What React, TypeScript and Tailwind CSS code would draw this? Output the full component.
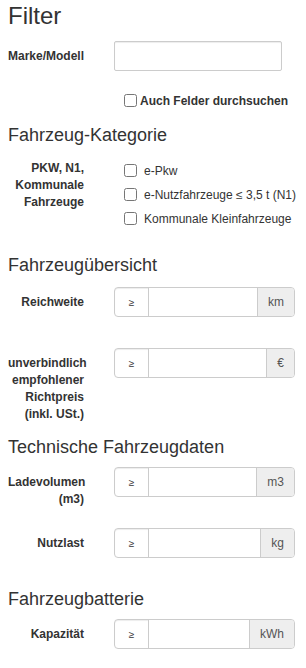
import { FC, ReactNode } from "react";

// Feld mit "≥" vorne und Einheit hinten
const RangeInput: FC<{ unit: string }> = ({ unit }) => (
  <div className="flex h-[30px] w-[181px] rounded-[4px] border border-[#ccc] shadow-[inset_0_1px_1px_rgba(0,0,0,0.075)]">
    <span className="flex w-[34px] shrink-0 items-center justify-center border-r border-[#ccc] text-[10px] text-[#333]">
      ≥
    </span>
    <input className="min-w-0 flex-1 bg-white outline-none" />
    <span className="flex shrink-0 items-center rounded-r-[3px] border-l border-[#ccc] bg-[#eee] px-[10px] text-[12px] text-[#555]">
      {unit}
    </span>
  </div>
);

const Row: FC<{ label: ReactNode; className?: string; children: ReactNode }> = ({
  label,
  className = "",
  children,
}) => (
  <div className={`flex items-start gap-[30px] ${className}`}>
    <label className="w-[76px] shrink-0 pt-[7px] text-right text-[12px] font-bold leading-[17px] text-[#333]">
      {label}
    </label>
    {children}
  </div>
);

const Heading: FC<{ children: ReactNode; className?: string }> = ({ children, className = "" }) => (
  <h3 className={`text-[18px] leading-[20px] text-[#333] ${className}`}>{children}</h3>
);

const Check: FC<{ children: ReactNode; bold?: boolean }> = ({ children, bold }) => (
  <label className={`flex h-[17px] items-center text-[12px] text-[#333] ${bold ? "font-bold" : ""}`}>
    <input type="checkbox" className="m-0 size-[13px]" />
    <span className={bold ? "ml-[3px]" : "ml-[7px]"}>{children}</span>
  </label>
);

export default function App() {
  return (
    <div className="min-h-[668px] w-[306px] bg-white px-2 pt-[3px] font-['Liberation_Sans',Arial,sans-serif]">
      <h2 className="text-[24px] leading-[26px] text-[#333]">Filter</h2>

      <Row label="Marke/Modell" className="mt-[12px]">
        <input className="h-[30px] w-[168px] rounded-[2px] border border-[#ccc] bg-white shadow-[inset_0_1px_1px_rgba(0,0,0,0.075)] outline-none" />
      </Row>
      <div className="ml-[116px] mt-[21px]">
        <Check bold>Auch Felder durchsuchen</Check>
      </div>

      <Heading className="mt-[16px]">Fahrzeug-Kategorie</Heading>
      <div className="mt-[8px] flex items-start gap-[30px]">
        <div className="w-[76px] shrink-0 pt-[7px] text-right text-[12px] font-bold leading-[17px] text-[#333]">
          PKW, N1,
          <br />
          Kommunale
          <br />
          Fahrzeuge
        </div>
        <div className="flex flex-col gap-[7px] pt-[9px] pl-[10px]">
          <Check>e-Pkw</Check>
          <Check>e-Nutzfahrzeuge ≤ 3,5 t (N1)</Check>
          <Check>Kommunale Kleinfahrzeuge</Check>
        </div>
      </div>

      <Heading className="mt-[28px]">Fahrzeugübersicht</Heading>
      <Row label="Reichweite" className="mt-[12px]">
        <RangeInput unit="km" />
      </Row>
      <Row label="unverbindlich empfohlener Richtpreis (inkl. USt.)" className="mt-[31px]">
        <RangeInput unit="€" />
      </Row>

      <Heading className="mt-[14px]">Technische Fahrzeugdaten</Heading>
      <Row label="Ladevolumen (m3)" className="mt-[10px]">
        <RangeInput unit="m3" />
      </Row>
      <Row label="Nutzlast" className="mt-[20px]">
        <RangeInput unit="kg" />
      </Row>

      <Heading className="mt-[31px]">Fahrzeugbatterie</Heading>
      <Row label="Kapazität" className="mt-[10px]">
        <RangeInput unit="kWh" />
      </Row>
    </div>
  );
}
